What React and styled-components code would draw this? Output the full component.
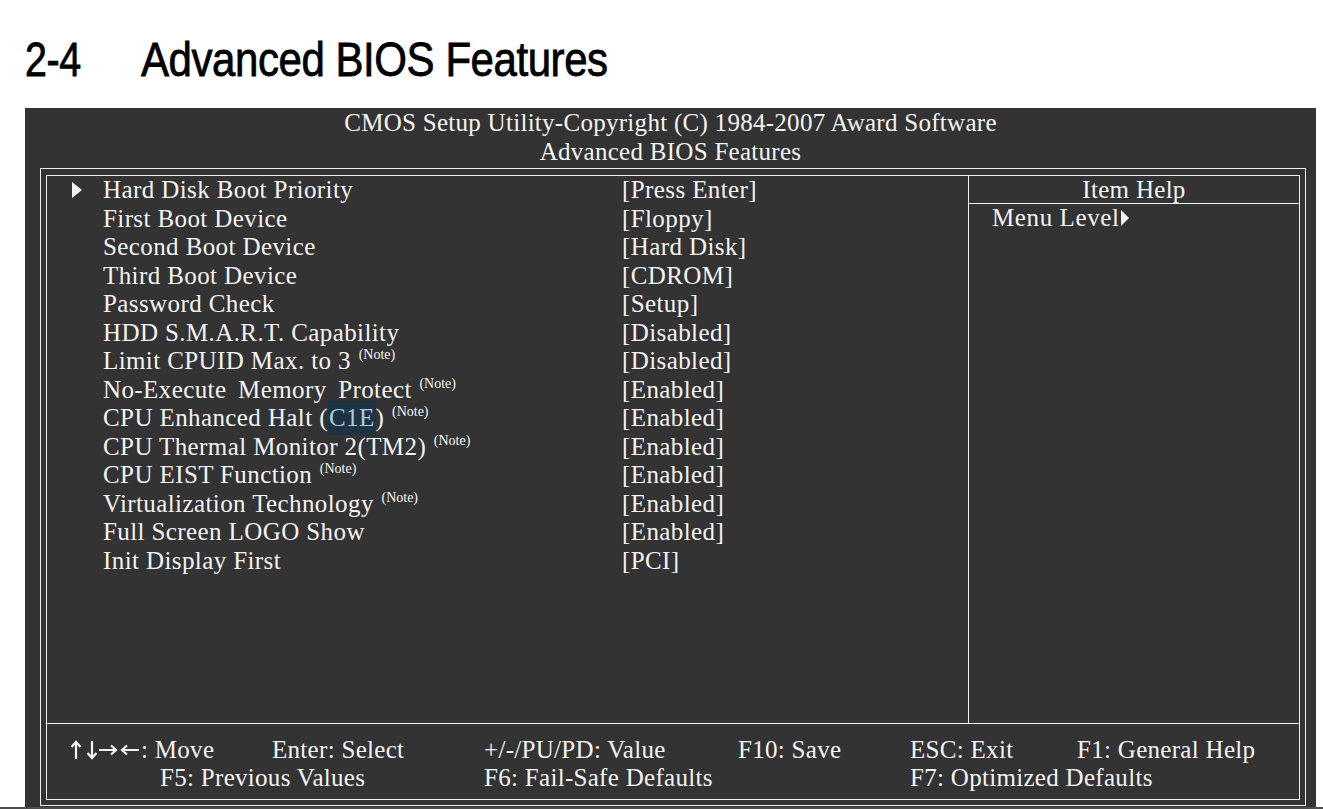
import React from "react";
import styled, { createGlobalStyle } from "styled-components";

const Global = createGlobalStyle`
  html, body { margin: 0; padding: 0; background: #ffffff; }
  body { width: 1323px; height: 809px; overflow: hidden; }
`;

const Page = styled.div`
  width: 1323px;
  height: 809px;
  display: flex;
  flex-direction: column;
  background: #ffffff;
`;

const Heading = styled.h1`
  margin: 0;
  height: 108px;
  box-sizing: border-box;
  padding: 36px 0 0 25px;
  display: flex;
  font-family: "Liberation Sans", Arial, sans-serif;
  font-weight: 400;
  font-size: 48px;
  line-height: 48px;
  color: #000;
  -webkit-text-stroke: 0.8px #000;
`;

const HeadPart = styled.span`
  display: inline-block;
  width: ${(p) => p.$w}px;
  white-space: nowrap;
  transform: scaleX(${(p) => p.$sx});
  transform-origin: left center;
  letter-spacing: -0.5px;
`;

const Panel = styled.div`
  margin-left: 25px;
  width: 1291px;
  height: 699px;
  background: #333333;
  color: #f3f3f3;
  font-family: "Liberation Serif", "Times New Roman", serif;
  display: flex;
  flex-direction: column;
`;

const BottomRule = styled.div`
  height: 2px;
  background: #4d4d4d;
`;

const Banner = styled.div`
  text-align: center;
  font-size: 25px;
  letter-spacing: 0.28px;
  line-height: 29px;
  height: 60px;
`;

const Outer = styled.div`
  margin-left: 15px;
  width: 1266px;
  height: 638px;
  box-sizing: border-box;
  border: 1px solid #f0f0f0;
  padding: 6px 5px 5px 5px;
`;

const Inner = styled.div`
  height: 100%;
  box-sizing: border-box;
  border: 1px solid #f0f0f0;
  display: flex;
  flex-direction: column;
`;

const Main = styled.div`
  flex: 1;
  display: grid;
  grid-template-columns: 922px 1fr;
`;

const List = styled.div`
  border-right: 1px solid #f0f0f0;
  display: flex;
  flex-direction: column;
`;

const Row = styled.div`
  display: grid;
  grid-template-columns: 56px 519px 1fr;
  height: 28.5px;
  align-items: center;
  font-size: 25px;
  line-height: 28px;
  letter-spacing: 0.4px;
  white-space: nowrap;
`;

const LabelText = styled.span`
  word-spacing: ${(p) => (p.$wide ? "5px" : "0")};
`;

const ArrowCell = styled.div`
  padding-left: 25px;
  display: flex;
  align-items: center;
  height: 28px;
`;

const Note = styled.sup`
  font-size: 14px;
  line-height: 0;
  vertical-align: 10px;
  letter-spacing: 0;
  margin-left: 1px;
`;

const Mark = styled.span`
  background: #1d3342;
  color: #a9cbe0;
  padding: 3px 1px 4px 1px;
`;

const Value = styled.div``;

const Help = styled.div`
  display: flex;
  flex-direction: column;
`;

const HelpHead = styled.div`
  height: 27px;
  border-bottom: 1px solid #f0f0f0;
  text-align: center;
  font-size: 25px;
  line-height: 28px;
  letter-spacing: 0.3px;
`;

const HelpText = styled.div`
  padding-left: 23px;
  font-size: 25px;
  line-height: 28.5px;
  letter-spacing: 0.6px;
  display: flex;
  align-items: center;
  gap: 2px;
  height: 28.5px;
`;

const Footer = styled.div`
  border-top: 1px solid #f0f0f0;
  height: 76px;
  box-sizing: border-box;
  padding: 12px 0 0 23px;
  display: grid;
  grid-template-columns: 90px 112px 212px 254px 172px 167px 1fr;
  grid-auto-rows: 28px;
  font-size: 25px;
  line-height: 28px;
  letter-spacing: 0.3px;
  white-space: nowrap;
`;

const Key = styled.div`
  grid-column: ${(p) => p.$col};
  grid-row: ${(p) => p.$row};
  display: flex;
  align-items: center;
`;

const ArrowKeys = styled.svg`
  width: 72px;
  height: 20px;
  margin-left: -1px;
  flex: none;
`;

const MoveArrows = () => (
  <ArrowKeys viewBox="0 0 72 20" fill="none" stroke="#f3f3f3" strokeWidth="2.2" strokeLinecap="butt">
    <path d="M7 19 V2 M2.5 7 L7 2 L11.5 7" />
    <path d="M23 1 V18 M18.5 13 L23 18 L27.5 13" />
    <path d="M30 10 H47 M42 5.5 L47 10 L42 14.5" />
    <path d="M70 10 H53 M58 5.5 L53 10 L58 14.5" />
  </ArrowKeys>
);

const Tri = ({ w = 10, h = 16 }) => (
  <svg width={w} height={h} viewBox="0 0 9 15" preserveAspectRatio="none">
    <path d="M0 0 L9 7.5 L0 15 Z" fill="#f3f3f3" />
  </svg>
);

const rows = [
  { label: "Hard Disk Boot Priority", value: "[Press Enter]", arrow: true },
  { label: "First Boot Device", value: "[Floppy]" },
  { label: "Second Boot Device", value: "[Hard Disk]" },
  { label: "Third Boot Device", value: "[CDROM]" },
  { label: "Password Check", value: "[Setup]" },
  { label: "HDD S.M.A.R.T. Capability", value: "[Disabled]" },
  { label: "Limit CPUID Max. to 3", value: "[Disabled]", note: true },
  { label: "No-Execute Memory Protect", value: "[Enabled]", note: true, wide: true },
  { label: "CPU Enhanced Halt (", mark: "C1E", tail: ")", value: "[Enabled]", note: true },
  { label: "CPU Thermal Monitor 2(TM2)", value: "[Enabled]", note: true },
  { label: "CPU EIST Function", value: "[Enabled]", note: true },
  { label: "Virtualization Technology", value: "[Enabled]", note: true },
  { label: "Full Screen LOGO Show", value: "[Enabled]" },
  { label: "Init Display First", value: "[PCI]" },
];

export default function App() {
  return (
    <Page>
      <Global />
      <Heading>
        <HeadPart $w={116} $sx={0.82}>2-4</HeadPart>
        <HeadPart $w={490} $sx={0.875}>Advanced BIOS Features</HeadPart>
      </Heading>
      <Panel>
        <Banner>
          <div>CMOS Setup Utility-Copyright (C) 1984-2007 Award Software</div>
          <div>Advanced BIOS Features</div>
        </Banner>
        <Outer>
          <Inner>
            <Main>
              <List>
                {rows.map((r) => (
                  <Row key={r.label}>
                    <ArrowCell>{r.arrow && <Tri />}</ArrowCell>
                    <div>
                      <LabelText $wide={r.wide}>{r.label}</LabelText>
                      {r.mark && <Mark>{r.mark}</Mark>}
                      {r.tail}
                      {r.note && (
                        <>
                          {" "}
                          <Note>(Note)</Note>
                        </>
                      )}
                    </div>
                    <Value>{r.value}</Value>
                  </Row>
                ))}
              </List>
              <Help>
                <HelpHead>Item Help</HelpHead>
                <HelpText>
                  Menu Level
                  <Tri w={8} h={16} />
                </HelpText>
              </Help>
            </Main>
            <Footer>
              <Key $col="1 / span 2" $row={1}>
                <MoveArrows />: Move
              </Key>
              <Key $col={3} $row={1}>Enter: Select</Key>
              <Key $col={4} $row={1}>+/-/PU/PD: Value</Key>
              <Key $col={5} $row={1}>F10: Save</Key>
              <Key $col={6} $row={1}>ESC: Exit</Key>
              <Key $col={7} $row={1}>F1: General Help</Key>
              <Key $col="2 / span 2" $row={2}>F5: Previous Values</Key>
              <Key $col={4} $row={2}>F6: Fail-Safe Defaults</Key>
              <Key $col="6 / span 2" $row={2}>F7: Optimized Defaults</Key>
            </Footer>
          </Inner>
        </Outer>
      </Panel>
      <BottomRule />
    </Page>
  );
}
